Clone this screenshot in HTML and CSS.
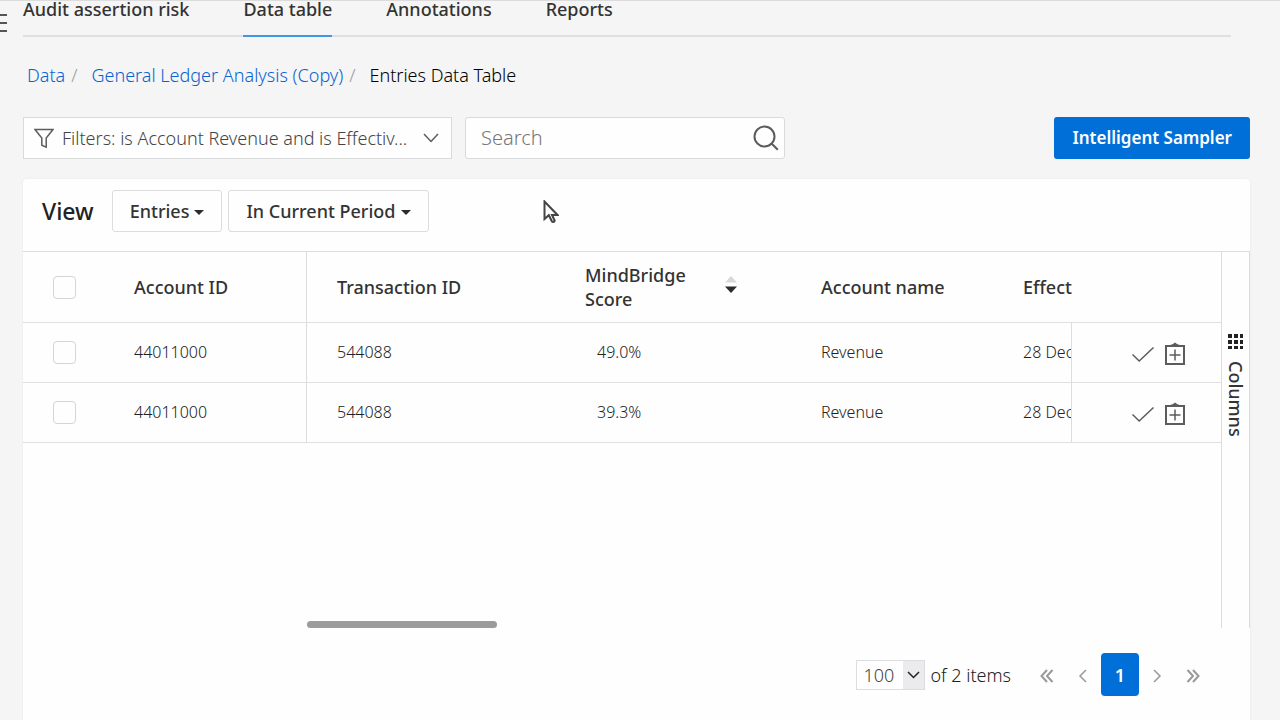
FILE: index.html
```html
<!DOCTYPE html>
<html lang="en">
<head>
    <meta charset="UTF-8">
    <title>Entries Data Table</title>
    <link rel="stylesheet" href="styles.css">
</head>
<body>
    <button class="menu" aria-label="Menu"><span></span><span></span><span></span></button>

    <nav class="tabs">
        <a href="#">Audit assertion risk</a>
        <a href="#" class="active">Data table</a>
        <a href="#">Annotations</a>
        <a href="#">Reports</a>
    </nav>

    <main>
        <ol class="breadcrumb">
            <li><a href="#">Data</a></li>
            <li><a href="#">General Ledger Analysis (Copy)</a></li>
            <li>Entries Data Table</li>
        </ol>

        <div class="toolbar">
            <button class="filters">
                <svg width="20" height="21" viewBox="0 0 20 21"><path d="M1 1.500h18l-6.800 8.500v9.200l-4.400-2V10z"/></svg>
                <span>Filters: is Account Revenue and is Effectiv...</span>
                <svg width="16" height="10" viewBox="0 0 16 10"><path d="M1 1l7 7.500L15 1"/></svg>
            </button>
            <div class="search">
                <input type="text" placeholder="Search" aria-label="Search">
                <svg width="26" height="26" viewBox="0 0 26 26"><circle cx="11.500" cy="11.500" r="10"/><path d="M18.500 18.500l6.300 6.300"/></svg>
            </div>
            <button class="primary">Intelligent Sampler</button>
        </div>

        <section class="card">
            <div class="view">
                <h2>View</h2>
                <button class="drop">Entries</button>
                <button class="drop">In Current Period</button>
            </div>

            <div class="grid">
                <div class="grid-body">
                    <table>
                        <colgroup>
                            <col class="c-check">
                            <col class="c-account">
                            <col class="c-trans">
                            <col class="c-score">
                            <col class="c-name">
                            <col>
                            <col class="c-action">
                        </colgroup>
                        <thead>
                            <tr>
                                <th class="check"><input type="checkbox" aria-label="Select all"></th>
                                <th class="pin">Account ID</th>
                                <th>Transaction ID</th>
                                <th>
                                    <div class="sort">
                                        <span>MindBridge Score</span>
                                        <svg width="12" height="17" viewBox="0 0 12 17"><path class="up" d="M0 6.500L6 0l6 6.500z"/><path class="down" d="M0 10.500h12L6 17z"/></svg>
                                    </div>
                                </th>
                                <th>Account name</th>
                                <th class="cut">Effect</th>
                                <th></th>
                            </tr>
                        </thead>
                        <tbody>
                            <tr>
                                <td class="check"><input type="checkbox" aria-label="Select row 1"></td>
                                <td class="pin">44011000</td>
                                <td>544088</td>
                                <td class="score">49.0%</td>
                                <td>Revenue</td>
                                <td class="cut pin">28 Dec</td>
                                <td class="action">
                                    <div>
                                        <button aria-label="Approve"><svg width="24" height="24" viewBox="0 0 24 24"><path d="M1.500 12.500l6.700 6.500L22.500 5.500"/></svg></button>
                                        <button aria-label="Add to plan"><svg width="24" height="24" viewBox="0 0 24 24"><path class="thick" d="M3 4h18v18H3z"/><path class="cap" d="M6 5V3.500L10 2l2-1.500L14 2l4 1.500V5z"/><path d="M12 7.500v11M6.500 13h11"/></svg></button>
                                    </div>
                                </td>
                            </tr>
                            <tr>
                                <td class="check"><input type="checkbox" aria-label="Select row 2"></td>
                                <td class="pin">44011000</td>
                                <td>544088</td>
                                <td class="score">39.3%</td>
                                <td>Revenue</td>
                                <td class="cut pin">28 Dec</td>
                                <td class="action">
                                    <div>
                                        <button aria-label="Approve"><svg width="24" height="24" viewBox="0 0 24 24"><path d="M1.500 12.500l6.700 6.500L22.500 5.500"/></svg></button>
                                        <button aria-label="Add to plan"><svg width="24" height="24" viewBox="0 0 24 24"><path class="thick" d="M3 4h18v18H3z"/><path class="cap" d="M6 5V3.500L10 2l2-1.500L14 2l4 1.500V5z"/><path d="M12 7.500v11M6.500 13h11"/></svg></button>
                                    </div>
                                </td>
                            </tr>
                        </tbody>
                    </table>
                    <div class="scroll"></div>
                </div>
                <div class="side">
                    <button>
                        <svg width="15" height="15" viewBox="0 0 15 15"><path d="M0 0h4v4H0zM6 0h4v4H6zM12 0h3v4h-3zM0 6h4v4H0zM6 6h4v4H6zM12 6h3v4h-3zM0 12h4v3H0zM6 12h4v3H6zM12 12h3v3h-3z"/></svg>
                        Columns
                    </button>
                </div>
            </div>

            <div class="pager">
                <select aria-label="Items per page"><option>100</option></select>
                <span>of 2 items</span>
                <div class="pages">
                    <button aria-label="First page"><svg width="14" height="14" viewBox="0 0 14 14"><path class="bold" d="M7 1L1.500 7 7 13M12.500 1L7 7l5.500 6"/></svg></button>
                    <button aria-label="Previous page"><svg width="14" height="14" viewBox="0 0 14 14"><path d="M10 1L4 7l6 6"/></svg></button>
                    <button class="current">1</button>
                    <button aria-label="Next page"><svg width="14" height="14" viewBox="0 0 14 14"><path d="M4 1l6 6-6 6"/></svg></button>
                    <button aria-label="Last page"><svg width="14" height="14" viewBox="0 0 14 14"><path class="bold" d="M1.500 1L7 7l-5.500 6M7 1l5.500 6L7 13"/></svg></button>
                </div>
            </div>
        </section>
    </main>

    <svg class="cursor" width="16" height="24" viewBox="0 0 16 24"><path d="M1.500 1.500v17.500l4.300-3.800 3.200 6.300q1.500 1.300 2.700-.8l-2.700-5.700h5.500z"/></svg>
</body>
</html>
```

FILE: styles.css
```css
*{
    box-sizing: border-box;
}
body{
    margin: 0;
    height: 100vh;
    overflow: hidden;
    display: flex;
    flex-direction: column;
    border-top: 1px solid #dcdcdc;
    background: #f5f5f5;
    color: #222;
    font: 300 18px/24px "Noto Sans", "Open Sans", sans-serif;
}
button,input,select{
    font: inherit;
    color: inherit;
}
button{
    padding: 0;
    border: 0;
    background: none;
}
a{
    color: #0a62d0;
    text-decoration: none;
}
svg{
    display: block;
    flex: none;
    fill: none;
    stroke: #5c5c5c;
    stroke-width: 1.5;
}

/* menu handle sticks out of the left edge */
.menu{
    position: absolute;
    top: 14px;
    left: 0;
    width: 7px;
}
.menu span{
    display: block;
    height: 2px;
    margin-bottom: 6px;
    background: #555;
}

.tabs{
    display: flex;
    gap: 54px;
    height: 36px;
    margin: 0 49px 0 23px;
    border-bottom: 2px solid #e0e0e0;
    font-weight: 500;
    line-height: 16px;
}
.tabs a{
    height: 36px;
    color: #333;
}
.tabs .active{
    border-bottom: 2px solid #3f98e6;
}

main{
    flex: 1;
    display: flex;
    flex-direction: column;
    padding: 26px 30px 0 23px;
}
.breadcrumb{
    display: flex;
    margin: 0;
    padding: 0 4px;
    list-style: none;
    color: #000;
}
.breadcrumb li+li:before{
    content: "/";
    padding: 0 14px 0 6px;
    color: #999;
}

.toolbar{
    display: flex;
    gap: 13px;
    margin: 30px 0 20px;
}
.filters{
    display: flex;
    align-items: center;
    gap: 8px;
    width: 429px;
    height: 42px;
    padding: 0 12px 0 10px;
    border: 1px solid #d9dadb;
    background: #fefefe;
    color: #444;
}
.filters span{
    flex: 1;
    min-width: 0;
    text-align: left;
    white-space: nowrap;
}
.search{
    display: flex;
    align-items: center;
    width: 320px;
    height: 42px;
    padding: 0 5px 0 15px;
    border: 1px solid #d9dadb;
    border-radius: 3px;
    background: #fefefe;
}
.search input{
    flex: 1;
    min-width: 0;
    padding: 0;
    border: 0;
    outline: 0;
    background: none;
    font-size: 20px;
}
.search input::placeholder{
    color: #777;
}
.search svg{
    stroke-width: 2;
}
.primary{
    height: 42px;
    margin-left: auto;
    padding: 0 18px;
    border-radius: 3px;
    background: #0070d8;
    color: #fff;
    font-size: 17px;
    font-weight: 600;
}

.card{
    flex: 1;
    border-radius: 4px 4px 0 0;
    background: #fefefe;
    box-shadow: 0 0 2px #e4e4e4;
}
.view{
    display: flex;
    align-items: center;
    gap: 6px;
    height: 72px;
    padding: 0 19px 8px;
}
.view h2{
    margin: 0 12px 0 0;
    font-size: 23px;
    font-weight: 500;
}
.drop{
    display: flex;
    align-items: center;
    gap: 5px;
    height: 42px;
    padding: 0 17px;
    border: 1px solid #dcddde;
    border-radius: 3px;
    color: #333;
    font-weight: 500;
}
.drop:after{
    content: "";
    margin-top: 3px;
    border: 5px solid transparent;
    border-top-color: #2c2c2c;
    border-bottom: 0;
}

.grid{
    display: flex;
    height: 377px;
    border-top: 1px solid #dcddde;
}
.grid-body{
    flex: 1;
    display: flex;
    flex-direction: column;
    justify-content: space-between;
}
table{
    width: 100%;
    table-layout: fixed;
    border-collapse: separate;
    border-spacing: 0;
}
.c-check{
    width: 81px;
}
.c-account{
    width: 203px;
}
.c-trans{
    width: 248px;
}
.c-score{
    width: 236px;
}
.c-name{
    width: 202px;
}
.c-action{
    width: 149px;
}
th,td{
    padding: 0 0 0 30px;
    border-bottom: 1px solid #e0e0e0;
    text-align: left;
}
th{
    height: 71px;
    color: #333;
    font-weight: 500;
}
td{
    height: 60px;
    padding-bottom: 2px;
    font-size: 16px;
}
.pin{
    border-right: 1px solid #dcddde;
}
.cut{
    overflow: hidden;
    white-space: nowrap;
}
.score{
    padding-left: 42px;
}
td.check{
    padding-bottom: 0;
}
.check input{
    display: block;
    width: 23px;
    height: 23px;
    margin: 0;
    appearance: none;
    border: 1px solid #d4d5d7;
    border-radius: 4px;
}
.sort{
    display: flex;
    align-items: center;
    justify-content: space-between;
    padding-right: 54px;
}
.sort span{
    width: 110px;
}
.sort svg{
    margin-bottom: 6px;
    stroke: none;
}
.sort .up{
    fill: #d8d8d8;
}
.sort .down{
    fill: #2c2c2c;
}
.action div{
    display: flex;
    justify-content: flex-end;
    gap: 8px;
    padding: 4px 34px 0 0;
}
.action .thick{
    stroke-width: 2;
}
.action .cap{
    fill: #5c5c5c;
    stroke: none;
}
.scroll{
    width: 190px;
    height: 7px;
    margin-left: 284px;
    border-radius: 4px;
    background: #9b9b9b;
}
.side{
    width: 29px;
    border: 1px solid #dcddde;
    border-width: 0 1px;
}
.side button{
    display: flex;
    align-items: center;
    gap: 12px;
    margin-top: 82px;
    color: #333;
    line-height: 27px;
    writing-mode: vertical-rl;
    font-weight: 500;
}
.side svg{
    fill: #222;
    stroke: none;
}

.pager{
    display: flex;
    align-items: center;
    justify-content: flex-end;
    gap: 5px;
    padding: 25px 39px 0 0;
}
.pager select{
    width: 69px;
    height: 30px;
    padding: 0 6px;
    appearance: none;
    border: 1px solid #dcddde;
    border-radius: 0;
    /* arrow drawn over the grey right part */
    background: url("data:image/svg+xml,%3Csvg xmlns='http://www.w3.org/2000/svg' width='21' height='28'%3E%3Cpath fill='%23ebebed' d='M0 0h21v28H0z'/%3E%3Cpath fill='none' stroke='%23222' stroke-width='1.500' d='M5 11l5.500 5.500L16 11'/%3E%3C/svg%3E") no-repeat right #fefefe;
    color: #444;
}
.pages{
    display: flex;
    align-items: center;
    margin-left: 13px;
}
.pages button{
    display: flex;
    align-items: center;
    justify-content: center;
    width: 36px;
    height: 43px;
}
.pages svg{
    margin-top: 3px;
    stroke: #999;
}
.pages .bold{
    stroke-width: 2;
}
.pages .current{
    width: 38px;
    border-radius: 4px;
    background: #0070d8;
    color: #fff;
    font-weight: 600;
}

.cursor{
    position: absolute;
    top: 200px;
    left: 543px;
    fill: #fefefe;
    stroke: #444;
    stroke-width: 2;
}
```
